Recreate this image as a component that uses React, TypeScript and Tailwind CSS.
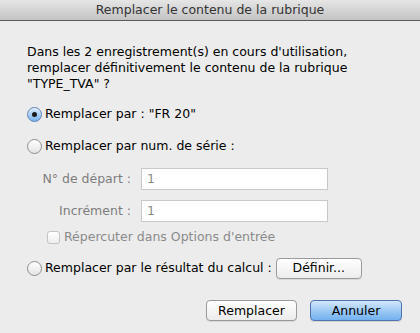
import React from "react";

const font = { fontFamily: '"DejaVu Sans", "Liberation Sans", sans-serif' };

function Radio({ checked }: { checked?: boolean }) {
  return checked ? (
    <span className="flex h-[15px] w-[15px] shrink-0 items-center justify-center rounded-full border border-[#5b7fb3] bg-gradient-to-b from-[#d6e8fb] to-[#7ab4ee] shadow-[inset_0_1px_1px_rgba(255,255,255,0.7)]">
      <span className="h-[5px] w-[5px] rounded-full bg-[#1a1a1a]" />
    </span>
  ) : (
    <span className="h-[15px] w-[15px] shrink-0 rounded-full border border-[#8e8e8e] bg-gradient-to-b from-[#ffffff] to-[#e4e4e4]" />
  );
}

function Field({ label, value }: { label: string; value: string }) {
  return (
    <div className="flex items-center">
      <span className="w-[104px] text-right text-[#7d7d7d]">{label}</span>
      <div className="ml-[10px] flex h-[22px] w-[187px] items-center border border-[#c9c9c9] bg-white pl-[5px] text-[#8a8a8a]">
        {value}
      </div>
    </div>
  );
}

export default function App() {
  return (
    <div
      className="flex h-[333px] w-[420px] flex-col bg-[#ececec] text-[12.5px] leading-[16px] text-black"
      style={font}
    >
      <div className="flex h-[21px] shrink-0 items-center justify-center border-b border-[#5a5a5a] bg-gradient-to-b from-[#e6e6e6] to-[#c3c3c3] text-[#333]">
        Remplacer le contenu de la rubrique
      </div>

      <div className="flex flex-col pl-[27px]">
        <p className="mt-[23px]">
          Dans les 2 enregistrement(s) en cours d'utilisation,
          <br />
          remplacer définitivement le contenu de la rubrique
          <br />
          "TYPE_TVA" ?
        </p>

        <label className="mt-[12px] flex h-[20px] items-center gap-[3px]">
          <Radio checked />
          <span>Remplacer par : "FR 20"</span>
        </label>

        <label className="mt-[12px] flex h-[20px] items-center gap-[3px]">
          <Radio />
          <span>Remplacer par num. de série :</span>
        </label>

        <div className="mt-[12px] flex flex-col gap-[10px]">
          <Field label="N° de départ :" value="1" />
          <Field label="Incrément :" value="1" />
        </div>

        <div className="ml-[20px] mt-[7px] flex h-[16px] items-center gap-[4px] text-[#8a8a8a]">
          <span className="h-[13px] w-[13px] rounded-[3px] border border-[#c4c4c4] bg-gradient-to-b from-white to-[#eeeeee]" />
          <span>Répercuter dans Options d'entrée</span>
        </div>

        <div className="mt-[13px] flex h-[20px] items-center">
          <Radio />
          <span className="ml-[3px]">Remplacer par le résultat du calcul :</span>
          <button className="ml-[4px] h-[21px] w-[86px] rounded-[4px] border border-[#9a9a9a] bg-gradient-to-b from-white to-[#ececec] shadow-[0_1px_0_rgba(0,0,0,0.08)]">
            Définir...
          </button>
        </div>
      </div>

      <div className="mr-[18px] mt-[22px] flex justify-end gap-[13px]">
        <button className="h-[21px] w-[91px] rounded-[4px] border border-[#9a9a9a] bg-gradient-to-b from-white to-[#ececec] shadow-[0_1px_0_rgba(0,0,0,0.08)]">
          Remplacer
        </button>
        <button className="h-[21px] w-[92px] rounded-[4px] border border-[#4f74ad] bg-gradient-to-b from-[#d4e7fb] via-[#9ecaf5] to-[#72b1ef] shadow-[0_1px_0_rgba(0,0,0,0.1)]">
          Annuler
        </button>
      </div>
    </div>
  );
}
